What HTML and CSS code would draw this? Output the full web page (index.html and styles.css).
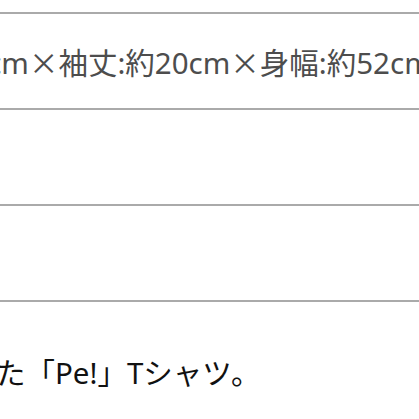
FILE: index.html
```html
<!DOCTYPE html>
<html lang="ja">
<head>
    <meta charset="UTF-8">
    <meta name="viewport" content="width=device-width, initial-scale=1.0">
    <title>商品詳細</title>
    <link rel="stylesheet" href="styles.css">
</head>
<body>
    <div class="spec">
        <div class="spec-row">
            <span class="size">着丈:約68cm<span class="x">×</span>袖丈:約20cm<span class="x">×</span>身幅:約52cm</span>
        </div>
        <div class="spec-row"></div>
        <div class="spec-row"></div>
    </div>
    <p class="desc">ロゴをプリントした「Pe!」Tシャツ。</p>
</body>
</html>
```
FILE: styles.css
```css
* {
    margin: 0;
    padding: 0;
    box-sizing: border-box;
}

html, body {
    overflow: hidden;
}

body {
    background: #fff;
    font-family: "Noto Sans", "Noto Sans CJK JP", sans-serif;
    font-size: 29.5px;
    padding-top: 12px;
}

.spec {
    border-top: 2px solid #aaa;
}

.spec-row {
    height: 96px;
    border-bottom: 2px solid #aaa;
    display: flex;
    align-items: center;
    white-space: nowrap;
}

.size {
    color: #4d4d4d;
    margin-left: -143px;
}

.x {
    font-family: "Noto Sans CJK JP", sans-serif;
}

.desc {
    color: #111;
    white-space: nowrap;
    margin-top: 50px;
    margin-left: -240px;
    line-height: 1.4;
}
```
